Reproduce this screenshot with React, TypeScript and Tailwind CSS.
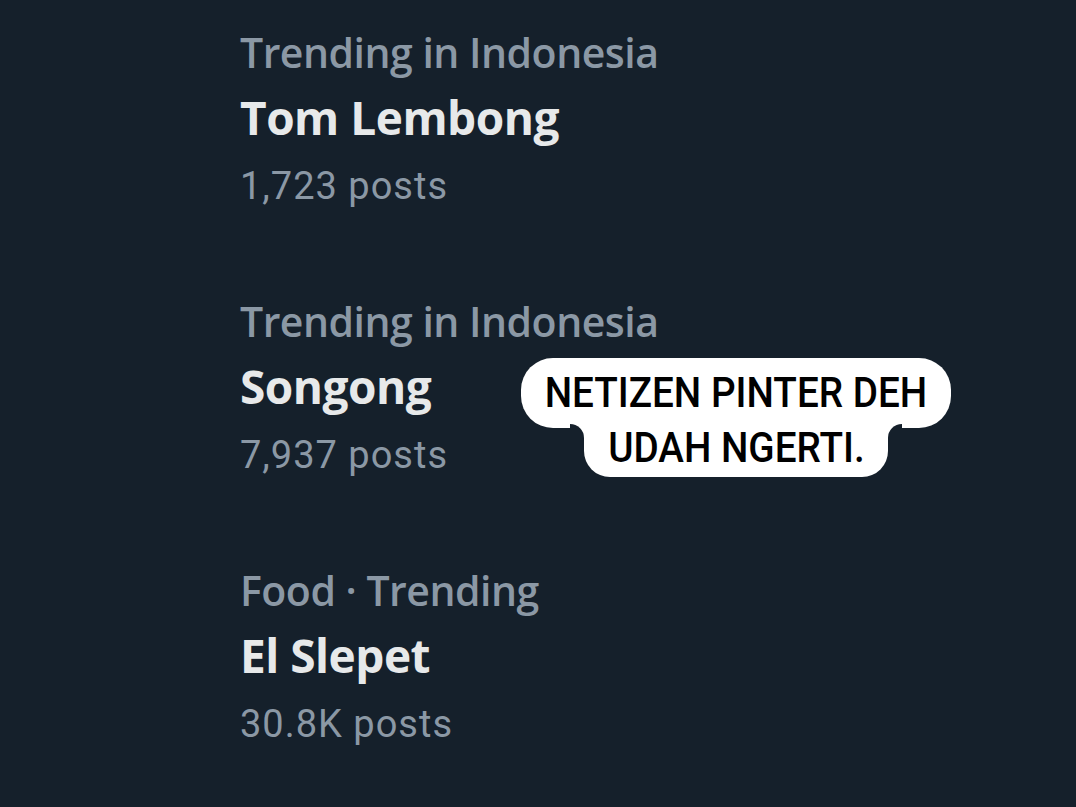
import React from 'react';

interface Trend {
  label: string;
  title: string;
  posts: string;
}

const trends: Trend[] = [
  { label: 'Trending in Indonesia', title: 'Tom Lembong', posts: '1,723 posts' },
  { label: 'Trending in Indonesia', title: 'Songong', posts: '7,937 posts' },
  { label: 'Food · Trending', title: 'El Slepet', posts: '30.8K posts' },
];

// concave join between the two sticker lines
const Fillet: React.FC<{ side: 'left' | 'right' }> = ({ side }) => (
  <div className={`absolute top-[66px] w-[14px] h-[14px] bg-white ${side === 'left' ? 'left-[49px]' : 'right-[49px]'}`}>
    <div className={`w-full h-full bg-[#15202b] ${side === 'left' ? 'rounded-tr-full' : 'rounded-tl-full'}`} />
  </div>
);

const App: React.FC = () => {
  return (
    <div className="relative w-[1076px] h-[807px] overflow-hidden bg-[#15202b]">
      <div className="flex flex-col gap-[71px] pl-[240px] pt-[22px]">
        {trends.map((t, i) => (
          <div key={i} className="flex flex-col">
            <p className="h-[60px] leading-[60px] text-[41px] font-semibold text-[#8b98a5] tracking-[-0.5px] font-['Open_Sans',sans-serif]">
              {t.label}
            </p>
            <p className="h-[70px] leading-[70px] text-[46px] font-bold text-[#e7e9ea] tracking-[-0.5px] font-['Open_Sans',sans-serif]">
              {t.title}
            </p>
            <p className="h-[68px] leading-[68px] text-[38px] text-[#8b98a5] tracking-[1px] font-['Roboto',sans-serif]">
              {t.posts}
            </p>
          </div>
        ))}
      </div>

      {/* Sticker */}
      <div className="absolute left-[521px] top-[358px] w-[430px] flex flex-col items-center">
        <div className="w-[430px] h-[70px] rounded-[32px] bg-white flex items-center justify-center">
          <span className="text-[42px] leading-none font-medium text-black font-['Roboto',sans-serif] scale-x-[0.92] whitespace-nowrap">
            NETIZEN PINTER DEH
          </span>
        </div>
        <div className="-mt-[4px] w-[304px] h-[53px] rounded-b-[26px] bg-white flex items-center justify-center pb-[6px]">
          <span className="text-[42px] leading-none font-medium text-black font-['Roboto',sans-serif] scale-x-[0.92] whitespace-nowrap">
            UDAH NGERTI.
          </span>
        </div>
        <Fillet side="left" />
        <Fillet side="right" />
      </div>
    </div>
  );
};

export default App;
